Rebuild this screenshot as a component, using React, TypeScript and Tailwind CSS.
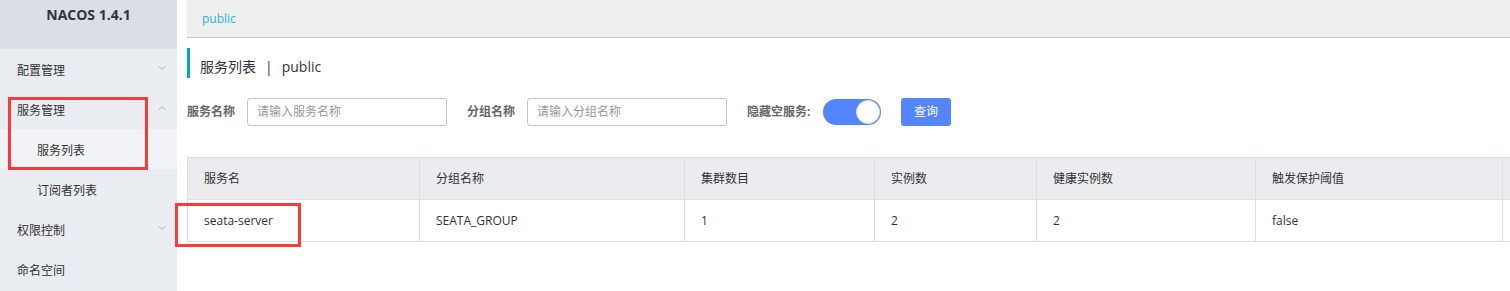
import { ChevronDown, ChevronUp } from 'lucide-react';

const font = { fontFamily: '"Open Sans", "Noto Sans CJK SC", sans-serif' };

const MenuItem = ({
  label,
  sub,
  open,
  arrow,
  active
}: {
  label: string;
  sub?: boolean;
  open?: boolean;
  arrow?: boolean;
  active?: boolean;
}) => {
  return (
    <div
      className={`flex h-10 items-center justify-between pt-[3px] pr-[9px] text-xs text-[#333] ${
        sub ? 'pl-[37px]' : 'pl-[17px]'
      } ${active ? 'bg-[#f2f3f7]' : ''}`}
    >
      <span>{label}</span>
      {arrow &&
        (open ? (
          <ChevronUp className="mb-[6px] size-3 text-[#999]" strokeWidth={1.5} />
        ) : (
          <ChevronDown className="mb-[6px] size-3 text-[#999]" strokeWidth={1.5} />
        ))}
    </div>
  );
};

const columns = ['服务名', '分组名称', '集群数目', '实例数', '健康实例数', '触发保护阈值', ''];
const row = ['seata-server', 'SEATA_GROUP', '1', '2', '2', 'false', ''];

const App = () => {
  return (
    <div className="relative flex h-[291px] w-[1510px] overflow-hidden bg-white" style={font}>
      <aside className="flex w-[177px] shrink-0 flex-col bg-[#e9ecf1]">
        <div className="flex h-[49px] justify-center bg-[#dadee5] pt-[5px] text-sm font-bold text-[#333]">
          NACOS 1.4.1
        </div>
        <MenuItem label="配置管理" arrow />
        <MenuItem label="服务管理" arrow open />
        <MenuItem label="服务列表" sub active />
        <MenuItem label="订阅者列表" sub />
        <MenuItem label="权限控制" arrow />
        <MenuItem label="命名空间" />
      </aside>

      <main className="flex min-w-0 flex-1 flex-col pl-[10px]">
        <div className="flex h-[38px] shrink-0 items-center border-b border-[#c8c8c8] bg-[#eeeeee] pl-[15px] text-xs text-[#1fb8e0]">
          public
        </div>

        <div className="mt-[10px] flex h-[30px] items-center border-l-[3px] border-[#0a9fd0] pt-[8px] pl-[10px] text-sm text-[#333]">
          服务列表<span className="mx-[9px]">|</span>public
        </div>

        <div className="mt-[20px] flex h-7 items-center text-xs">
          <span className="w-[60px] font-bold text-[#666]">服务名称</span>
          <div className="flex h-7 w-[200px] items-center rounded-[3px] border border-[#c4c6cf] pl-[9px] text-[#999]">
            请输入服务名称
          </div>
          <span className="ml-[20px] w-[60px] font-bold text-[#666]">分组名称</span>
          <div className="flex h-7 w-[200px] items-center rounded-[3px] border border-[#c4c6cf] pl-[9px] text-[#999]">
            请输入分组名称
          </div>
          <span className="ml-[20px] w-[76px] font-bold text-[#666]">隐藏空服务:</span>
          <div className="flex h-[26px] w-[58px] items-center justify-end rounded-full bg-[#5584ff] pr-px">
            <div className="size-6 rounded-full border border-[#d4dfff] bg-white" />
          </div>
          <div className="ml-[20px] flex h-7 w-[50px] items-center justify-center rounded-[3px] bg-[#5584ff] text-white">
            查询
          </div>
        </div>

        <div className="mt-[31px] grid w-[1415px] grid-cols-[232px_265px_190px_162px_219px_247px_100px] border-t border-l border-[#dcdee3] text-xs text-[#333]">
          {columns.map((c, i) => (
            <div
              key={`h${i}`}
              className="flex h-[42px] items-center border-r border-b border-[#dcdee3] bg-[#ebecf0] pl-4"
            >
              {c}
            </div>
          ))}
          {row.map((c, i) => (
            <div key={`r${i}`} className="flex h-[42px] items-center border-r border-b border-[#dcdee3] pl-4">
              {c}
            </div>
          ))}
        </div>
      </main>

      <div className="absolute top-[97px] left-[8px] h-[73px] w-[140px] border-[3px] border-[#fa3b3b]" />
      <div className="absolute top-[203px] left-[175px] h-[44px] w-[126px] border-[3px] border-[#fa3b3b]" />
    </div>
  );
};

export default App;
